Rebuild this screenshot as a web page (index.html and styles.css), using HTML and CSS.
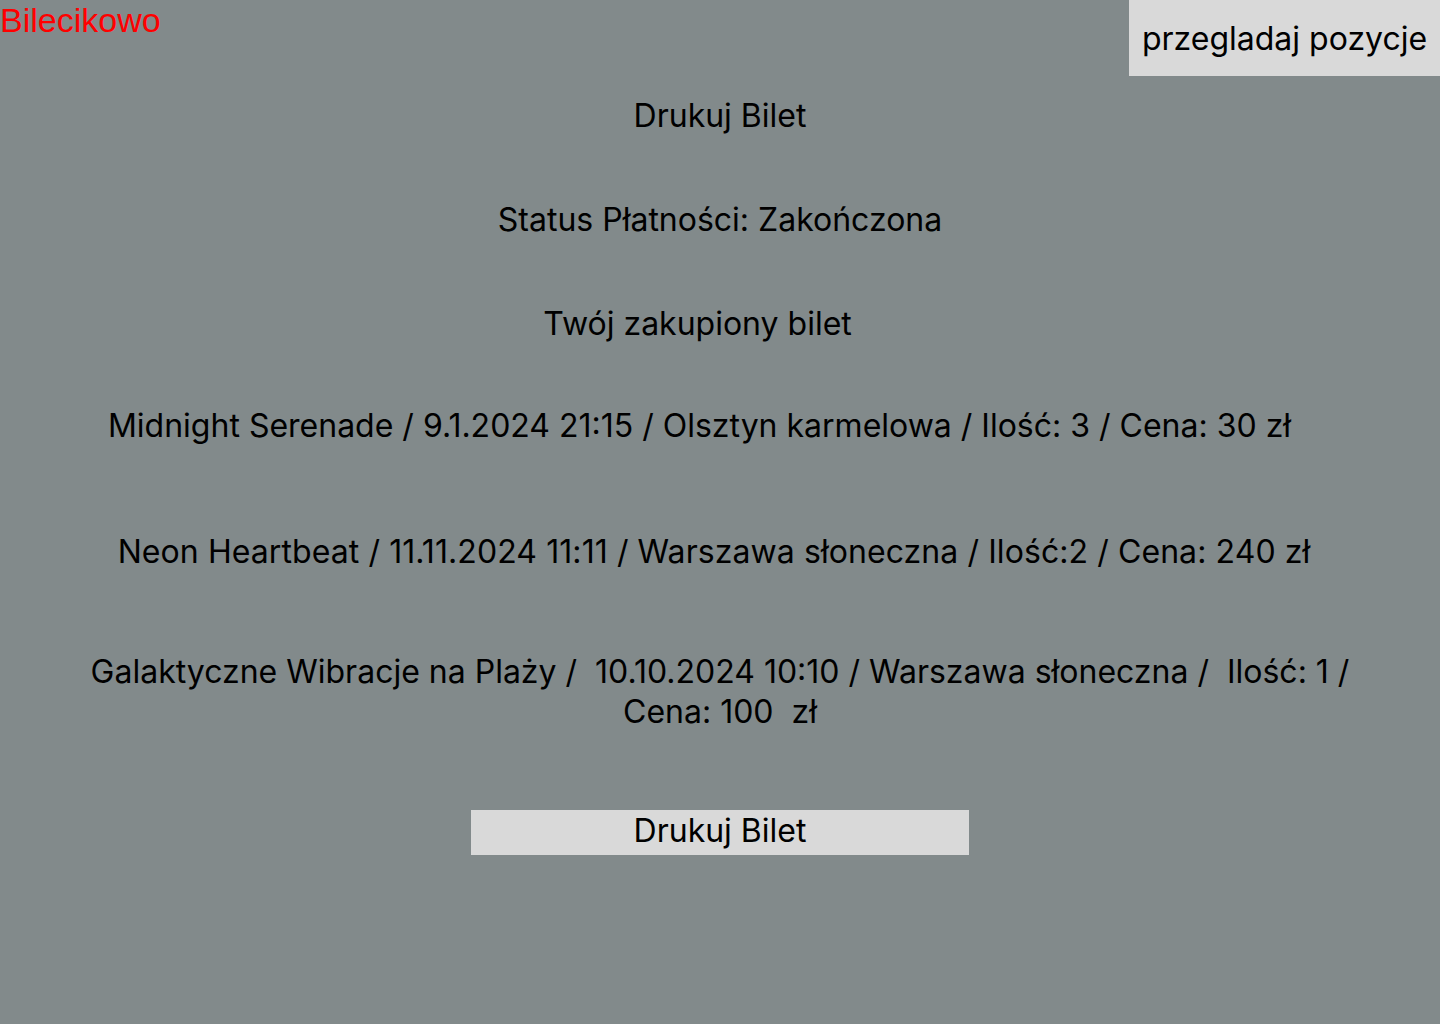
FILE: index.html
```html
<!DOCTYPE html>
<html lang="pl">
<head>
<meta charset="utf-8">
<title>Bilecikowo</title>
<link rel="stylesheet" href="styles.css">
</head>
<body>
<header class="top">
  <div class="logo">Bilecikowo</div>
  <button class="browse">przegladaj pozycje</button>
</header>
<main class="content">
  <h1 class="line title">Drukuj Bilet</h1>
  <p class="line status">Status Płatności: Zakończona</p>
  <p class="line bought">Twój zakupiony bilet</p>
  <p class="line t1">Midnight Serenade / 9.1.2024 21:15 / Olsztyn karmelowa / Ilość: 3 / Cena: 30 zł</p>
  <p class="line t2">Neon Heartbeat / 11.11.2024 11:11 / Warszawa słoneczna / Ilość:2 / Cena: 240 zł</p>
  <p class="line t3">Galaktyczne Wibracje na Plaży /  10.10.2024 10:10 / Warszawa słoneczna /  Ilość: 1 / Cena: 100  zł</p>
  <button class="print">Drukuj Bilet</button>
</main>
</body>
</html>
```
FILE: styles.css
```css
html, body {
  margin: 0;
  padding: 0;
}
body {
  background: #828a8b;
  width: 1440px;
  height: 1024px;
  overflow: hidden;
  font-family: Inter, "Noto Sans", sans-serif;
  color: #000;
}
.top {
  display: flex;
  justify-content: space-between;
  align-items: flex-start;
  height: 76px;
}
.logo {
  font-family: "Liberation Sans", Arial, sans-serif;
  color: #ff0000;
  font-size: 34px;
  line-height: 40px;
}
.browse {
  width: 311px;
  height: 76px;
  border: none;
  background: #d9d9d9;
  font-family: Inter, "Noto Sans", sans-serif;
  font-size: 32px;
  color: #000;
  padding: 0;
  margin: 0;
}
.content {
  display: flex;
  flex-direction: column;
  align-items: center;
}
.line {
  margin: 0;
  font-size: 32px;
  font-weight: 400;
  line-height: 40px;
  text-align: center;
  white-space: pre-wrap;
}
.title { margin-top: 20px; }
.status { margin-top: 64px; }
.bought { margin-top: 64px; padding-right: 45px; }
.t1 { margin-top: 62px; padding-right: 41px; }
.t2 { margin-top: 86px; padding-right: 12px; letter-spacing: 0.08px; }
.t3 { margin-top: 80px; max-width: 1290px; }
.print {
  margin-top: 78px;
  width: 498px;
  height: 45px;
  border: none;
  background: #d9d9d9;
  font-family: Inter, "Noto Sans", sans-serif;
  font-size: 32px;
  color: #000;
  padding: 0 0 4px;
}
```
